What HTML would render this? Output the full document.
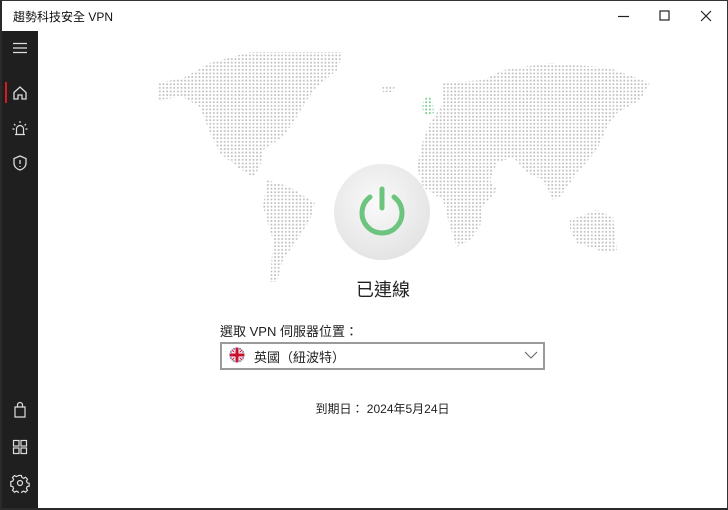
<!DOCTYPE html>
<html><head><meta charset="utf-8"><style>
*{margin:0;padding:0;box-sizing:border-box}
body{width:728px;height:510px;background:#fff;position:relative;overflow:hidden;font-family:"Liberation Sans","Noto Sans CJK TC",sans-serif;color:#222}
.frame{position:absolute;left:0;top:0;width:728px;height:510px;border:1px solid #333;border-left:2px solid #2a2a2a;border-bottom:2px solid #2a2a2a}
.title{position:absolute;left:13px;top:8px;font-size:12px;color:#111}
.side{position:absolute;left:2px;top:31px;width:36px;height:477px;background:#1f1f1f}
.side svg{position:absolute;left:8px}
.t{position:absolute;font-size:12px}
</style></head><body>
<div class="frame"></div>
<div class="title">趨勢科技安全 VPN</div>
<svg style="position:absolute;left:610px;top:6px" width="110" height="20" viewBox="0 0 110 20" fill="none" stroke="#222" stroke-width="1.2">
<path d="M8 10.5h11"/><rect x="50" y="5" width="9" height="9"/><path d="M91 5l10 10M101 5l-10 10"/>
</svg>
<div class="side">
<svg style="top:9px" width="20" height="16" viewBox="0 0 20 16" stroke="#ddd" stroke-width="1.3"><path d="M3 3.5h14M3 8h14M3 12.5h14"/></svg>
<div style="position:absolute;left:3px;top:51px;width:2px;height:21px;background:#d71920"></div>
<svg style="top:52px" width="20" height="20" viewBox="0 0 20 20" fill="none" stroke="#ddd" stroke-width="1.3"><path d="M4 9.5L10 4l6 5.5V16h-4v-4H8v4H4z"/></svg>
<svg style="top:88px" width="20" height="20" viewBox="0 0 20 20" fill="none" stroke="#ddd" stroke-width="1.2"><path d="M6.5 15V10a3.5 3.5 0 0 1 7 0v5M5 15.5h10M10 2v2M4 5l1.4 1.4M16 5l-1.4 1.4M2.5 10h2M15.5 10h2"/></svg>
<svg style="top:122px" width="20" height="20" viewBox="0 0 20 20" fill="none" stroke="#ddd" stroke-width="1.3"><path d="M10 3l6 2.5v4.5c0 3.5-2.6 6-6 7-3.4-1-6-3.5-6-7V5.5z"/><path d="M10 7v4M10 13v1"/></svg>
<svg style="top:369px" width="20" height="20" viewBox="0 0 20 20" fill="none" stroke="#ddd" stroke-width="1.2"><path d="M5 7h10v10H5zM7.5 7V5a2.5 2.5 0 0 1 5 0v2"/></svg>
<svg style="top:406px" width="20" height="20" viewBox="0 0 20 20" fill="none" stroke="#ddd" stroke-width="1.2"><rect x="3.5" y="3.5" width="5.5" height="5.5"/><rect x="11" y="3.5" width="5.5" height="5.5"/><rect x="3.5" y="11" width="5.5" height="5.5"/><rect x="11" y="11" width="5.5" height="5.5"/></svg>
<svg style="top:442px" width="20" height="20" viewBox="0 0 20 20" fill="none" stroke="#ddd" stroke-width="1.2"><circle cx="10" cy="10" r="2.5"/><path d="M8.6 2.5h2.8l.5 2 1.8.8 1.8-1.1 2 2-1.1 1.8.8 1.8 2 .5v2.8l-2 .5-.8 1.8 1.1 1.8-2 2-1.8-1.1-1.8.8-.5 2H8.6l-.5-2-1.8-.8-1.8 1.1-2-2 1.1-1.8-.8-1.8-2-.5V8.6l2-.5.8-1.8-1.1-1.8 2-2 1.8 1.1 1.8-.8z"/></svg>
</div>
<svg style="position:absolute;left:0;top:0" width="728" height="510">
<defs>
<pattern id="d" x="0" y="0" width="3.6" height="3.6" patternUnits="userSpaceOnUse"><rect x="0.6" y="0.6" width="1.7" height="1.7" fill="#bdbdbd"/></pattern>
<pattern id="gd" x="0" y="0" width="3.6" height="3.6" patternUnits="userSpaceOnUse"><rect x="0.6" y="0.6" width="1.7" height="1.7" fill="#6cc47f"/></pattern>
<radialGradient id="g" cx="0.45" cy="0.4" r="0.65"><stop offset="0" stop-color="#fafafa"/><stop offset="1" stop-color="#e2e2e2"/></radialGradient>
</defs>
<g fill="url(#d)">
<path d="M157 83L183 78L210 63L250 52L343 52L337 70L317 87L307 100L293 123L283 137L263 150L260 167L253 177L237 167L220 153L210 133L200 107L183 97L157 100Z"/>
<path d="M267 180L290 187L315 203L310 220L297 240L283 260L277 282L270 282L273 240L263 207Z"/>
<path d="M443 83L483 80L503 70L550 63L610 68L650 83L640 100L617 113L607 127L597 150L577 173L560 197L553 200L543 180L527 173L513 157L497 163L490 180L497 190L483 207L480 227L470 240L457 247L450 227L443 200L423 187L417 167L423 140L430 123L443 103Z"/>
<path d="M570 220L597 210L613 217L617 250L607 253L577 243L570 230Z"/>
<path d="M382 86L395 86L393 92L383 92Z"/>
</g>
<path d="M424 98L432 97L434 113L426 116L422 108Z" fill="url(#gd)"/>
<circle cx="382" cy="212" r="48" fill="url(#g)"/>
<path d="M370 197A20 20 0 1 0 394 197" fill="none" stroke="#6cc47f" stroke-width="5" stroke-linecap="round"/>
<path d="M382 189V208" stroke="#6cc47f" stroke-width="5" stroke-linecap="round"/>
</svg>
<div class="t" style="left:340px;top:276px;width:86px;text-align:center;font-size:18px;color:#222">已連線</div>
<div class="t" style="left:220px;top:321px;font-size:13px">選取 VPN 伺服器位置：</div>
<div style="position:absolute;left:220px;top:342px;width:325px;height:28px;border:2px solid #9a9a9a;background:#fff"></div>
<svg style="position:absolute;left:229px;top:347px" width="16" height="16" viewBox="0 0 16 16">
<clipPath id="c"><circle cx="8" cy="8" r="7.5"/></clipPath>
<g clip-path="url(#c)"><rect width="16" height="16" fill="#2a3f8f"/><path d="M0 0L16 16M16 0L0 16" stroke="#fff" stroke-width="3"/><path d="M0 0L16 16M16 0L0 16" stroke="#c8102e" stroke-width="1"/><path d="M8 0V16M0 8H16" stroke="#fff" stroke-width="5"/><path d="M8 0V16M0 8H16" stroke="#c8102e" stroke-width="3"/></g>
</svg>
<div class="t" style="left:254px;top:347px;font-size:13px">英國（紐波特）</div>
<svg style="position:absolute;left:524px;top:350px" width="14" height="10" viewBox="0 0 14 10"><path d="M1 2l6 6 6-6" fill="none" stroke="#666" stroke-width="1.1"/></svg>
<div class="t" style="left:310px;top:400px;width:145px;text-align:center">到期日： 2024年5月24日</div>
</body></html>
